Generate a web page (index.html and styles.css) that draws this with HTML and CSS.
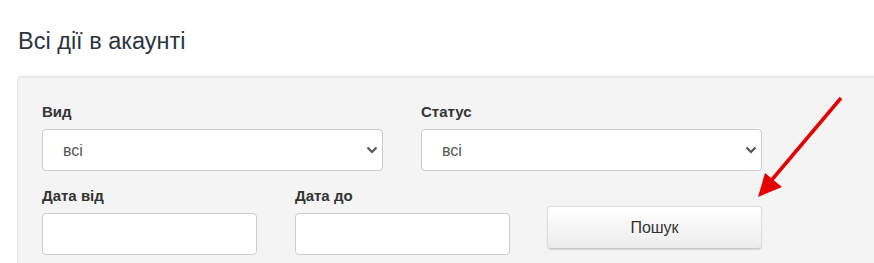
FILE: index.html
```html
<!DOCTYPE html>
<html>

<head>
    <title>Всі дії в акаунті</title>
    <link rel="stylesheet" href="styles.css">
</head>

<body>
    <h1 class="page-title">Всі дії в акаунті</h1>

    <div class="filter-panel">
        <form class="filter-form">
            <div class="filter-row two">
                <div class="field">
                    <label for="kind">Вид</label>
                    <div class="select-wrap">
                        <select id="kind">
                            <option>всі</option>
                        </select>
                        <svg class="chevron" width="12" height="8" viewBox="0 0 12 8">
                            <path d="M1.5 1.5 L6 6 L10.5 1.5" fill="none" stroke="#555" stroke-width="2.2" />
                        </svg>
                    </div>
                </div>
                <div class="field">
                    <label for="status">Статус</label>
                    <div class="select-wrap">
                        <select id="status">
                            <option>всі</option>
                        </select>
                        <svg class="chevron" width="12" height="8" viewBox="0 0 12 8">
                            <path d="M1.5 1.5 L6 6 L10.5 1.5" fill="none" stroke="#555" stroke-width="2.2" />
                        </svg>
                    </div>
                </div>
            </div>

            <div class="filter-row three">
                <div class="field">
                    <label for="date-from">Дата від</label>
                    <input id="date-from" type="text">
                </div>
                <div class="field">
                    <label for="date-to">Дата до</label>
                    <input id="date-to" type="text">
                </div>
                <div class="field button-field">
                    <button type="button" class="search-button">Пошук</button>
                </div>
            </div>
        </form>

        <!-- annotation arrow pointing at the search button -->
        <svg class="pointer-arrow" width="100" height="110" viewBox="0 0 100 110">
            <line x1="93" y1="10" x2="22" y2="94" stroke="#e60000" stroke-width="3.5" />
            <polygon points="10,109 17,85 34,99" fill="#e60000" />
        </svg>
    </div>
</body>

</html>
```

FILE: styles.css
```css
html,
body {
    height: 100%;
}

body {
    margin: 0;
    padding: 0 0 0 17px;
    font-family: "Liberation Sans", Arial, sans-serif;
    background: #fff;
    overflow: hidden;
    box-sizing: border-box;
}

.page-title {
    margin: 0;
    padding: 27px 0 0 1px;
    font-size: 23.5px;
    font-weight: normal;
    line-height: 28px;
    color: #2c3440;
}

/* panel runs off the right and bottom edges of the view */
.filter-panel {
    position: relative;
    margin-top: 21px;
    height: 187px;
    box-sizing: border-box;
    background: #f4f4f4;
    border: 1px solid #e3e3e3;
    border-right: none;
    border-bottom: none;
    border-top-left-radius: 4px;
    box-shadow: inset 0 1px 1px rgba(0, 0, 0, 0.04);
}

.filter-form {
    width: 720px;
    padding: 24px 0 0 24px;
}

.filter-row {
    display: grid;
    column-gap: 38px;
}

.filter-row.two {
    grid-template-columns: 341px 341px;
}

.filter-row.three {
    grid-template-columns: 215px 215px 215px;
    margin-top: 14px;
}

.field label {
    display: block;
    font-size: 15px;
    font-weight: bold;
    line-height: 22px;
    color: #333;
    margin-bottom: 6px;
}

.select-wrap {
    position: relative;
}

select,
input {
    display: block;
    width: 100%;
    height: 42px;
    box-sizing: border-box;
    border: 1px solid #ccc;
    border-radius: 4px;
    background: #fff;
    font-family: "Liberation Sans", Arial, sans-serif;
    font-size: 16px;
    color: #555;
}

select {
    appearance: none;
    -webkit-appearance: none;
    padding: 0 20px;
    outline: none;
}

.chevron {
    position: absolute;
    right: 5px;
    top: 17px;
}

.button-field {
    display: flex;
    align-items: flex-start;
    padding-top: 21px;
}

.search-button {
    width: 215px;
    height: 43px;
    margin-left: -1px;
    border: 1px solid #ddd;
    border-bottom-color: #c9c9c9;
    border-radius: 4px;
    background: linear-gradient(#ffffff, #ececec);
    box-shadow: 0 1px 1px rgba(0, 0, 0, 0.12);
    font-family: "Liberation Sans", Arial, sans-serif;
    font-size: 16px;
    color: #333;
}

.pointer-arrow {
    position: absolute;
    left: 730px;
    top: 11px;
}
```
